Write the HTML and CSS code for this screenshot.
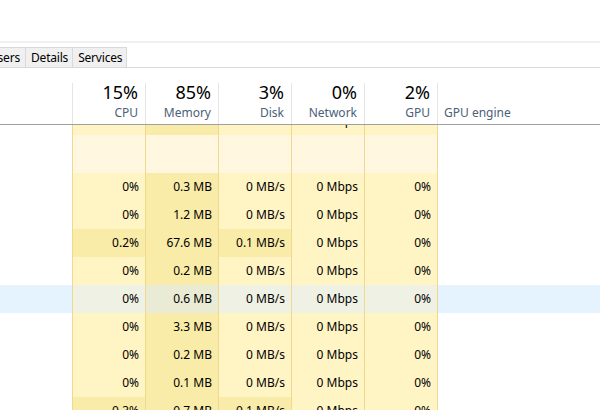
FILE: index.html
```html
<!DOCTYPE html>
<html lang="en">
<head>
<meta charset="utf-8">
<title>Task Manager</title>
<link rel="stylesheet" href="styles.css">
</head>
<body>
<div class="app">
  <div class="topspace"></div>
  <div class="divider"></div>
  <div class="tabs">
    <div class="tab tab-cut"><span>Users</span></div>
    <div class="tab">Details</div>
    <div class="tab">Services</div>
  </div>
  <div class="table">
    <div class="thead">
      <div class="hname"></div>
      <div class="hcol"><div class="pct">15%</div><div class="lbl">CPU</div></div>
      <div class="hcol"><div class="pct">85%</div><div class="lbl">Memory</div></div>
      <div class="hcol"><div class="pct">3%</div><div class="lbl">Disk</div></div>
      <div class="hcol"><div class="pct">0%</div><div class="lbl">Network</div></div>
      <div class="hcol"><div class="pct">2%</div><div class="lbl">GPU</div></div>
      <div class="hcol hleft"><div class="pct"></div><div class="lbl">GPU engine</div></div>
    </div>
    <div class="tbody">
      <div class="scroll">
        <div class="row">
          <div class="name"></div>
          <div class="cell">0%</div><div class="cell hot">0.4 MB</div><div class="cell">0 MB/s</div><div class="cell">0 Mbps</div><div class="cell">0%</div>
          <div class="eng"></div>
        </div>
        <div class="row group">
          <div class="name"></div>
          <div class="cell"></div><div class="cell"></div><div class="cell"></div><div class="cell"></div><div class="cell"></div>
          <div class="eng"></div>
        </div>
        <div class="row">
          <div class="name"></div>
          <div class="cell">0%</div><div class="cell hot">0.3 MB</div><div class="cell">0 MB/s</div><div class="cell">0 Mbps</div><div class="cell">0%</div>
          <div class="eng"></div>
        </div>
        <div class="row">
          <div class="name"></div>
          <div class="cell">0%</div><div class="cell hot">1.2 MB</div><div class="cell">0 MB/s</div><div class="cell">0 Mbps</div><div class="cell">0%</div>
          <div class="eng"></div>
        </div>
        <div class="row">
          <div class="name"></div>
          <div class="cell hot">0.2%</div><div class="cell hot">67.6 MB</div><div class="cell hot">0.1 MB/s</div><div class="cell">0 Mbps</div><div class="cell">0%</div>
          <div class="eng"></div>
        </div>
        <div class="row">
          <div class="name"></div>
          <div class="cell">0%</div><div class="cell hot">0.2 MB</div><div class="cell">0 MB/s</div><div class="cell">0 Mbps</div><div class="cell">0%</div>
          <div class="eng"></div>
        </div>
        <div class="row selected">
          <div class="name"></div>
          <div class="cell">0%</div><div class="cell hot">0.6 MB</div><div class="cell">0 MB/s</div><div class="cell">0 Mbps</div><div class="cell">0%</div>
          <div class="eng"></div>
        </div>
        <div class="row">
          <div class="name"></div>
          <div class="cell">0%</div><div class="cell hot">3.3 MB</div><div class="cell">0 MB/s</div><div class="cell">0 Mbps</div><div class="cell">0%</div>
          <div class="eng"></div>
        </div>
        <div class="row">
          <div class="name"></div>
          <div class="cell">0%</div><div class="cell hot">0.2 MB</div><div class="cell">0 MB/s</div><div class="cell">0 Mbps</div><div class="cell">0%</div>
          <div class="eng"></div>
        </div>
        <div class="row">
          <div class="name"></div>
          <div class="cell">0%</div><div class="cell hot">0.1 MB</div><div class="cell">0 MB/s</div><div class="cell">0 Mbps</div><div class="cell">0%</div>
          <div class="eng"></div>
        </div>
        <div class="row">
          <div class="name"></div>
          <div class="cell hot">0.3%</div><div class="cell hot">0.7 MB</div><div class="cell hot">0.1 MB/s</div><div class="cell">0 Mbps</div><div class="cell">0%</div>
          <div class="eng"></div>
        </div>
      </div>
    </div>
  </div>
</div>
</body>
</html>
```

FILE: styles.css
```css
html, body {
  margin: 0;
  padding: 0;
  background: #ffffff;
}

body {
  font-family: "Noto Sans", "Open Sans", sans-serif;
  font-size: 12px;
  color: #000000;
  width: 600px;
  height: 410px;
  overflow: hidden;
}

.app {
  display: flex;
  flex-direction: column;
  width: 600px;
  height: 410px;
  overflow: hidden;
}

.topspace {
  height: 41px;
  flex: none;
}

.divider {
  height: 2px;
  background: #f0f0f0;
  flex: none;
  margin-bottom: 4px;
}

.tabs {
  display: flex;
  height: 20px;
  border-bottom: 1px solid #d9d9d9;
  flex: none;
}

.tab {
  height: 19px;
  border: 1px solid #d9d9d9;
  border-bottom: none;
  border-left: none;
  background: #f0f0f0;
  padding: 0 4px 0 5px;
  line-height: 19px;
  letter-spacing: -0.2px;
  white-space: nowrap;
}

.tab-cut {
  width: 20px;
  padding: 0 5px 0 0;
  overflow: hidden;
  display: flex;
  justify-content: flex-end;
}

.table {
  display: flex;
  flex-direction: column;
  flex: 1;
  min-height: 0;
}

.thead {
  display: grid;
  grid-template-columns: 72px repeat(5, 73px) 1fr;
  height: 56px;
  border-bottom: 1px solid #a0a0a0;
  flex: none;
}

.hcol {
  margin-top: 15px;
  border-left: 1px solid #e5e5e5;
  text-align: right;
  padding-right: 7px;
}

.hleft {
  text-align: left;
  padding-left: 6px;
  padding-right: 0;
}

.pct {
  font-size: 18px;
  line-height: 19px;
  height: 19px;
  margin-bottom: 3px;
  color: #000000;
}

.lbl {
  line-height: 16px;
  color: #4c607a;
}

.tbody {
  flex: 1;
  min-height: 0;
  overflow: hidden;
}

.scroll {
  margin-top: -18px;
}

.row {
  display: grid;
  grid-template-columns: 72px repeat(5, 73px) 1fr;
  height: 28px;
  line-height: 28px;
}

.row.group {
  height: 38px;
}

.name, .eng {
  background: #ffffff;
}

.eng {
  border-left: 1px solid #f0d98f;
}

.cell {
  border-left: 1px solid #f0d98f;
  background: #fff4c4;
  text-align: right;
  padding-right: 6px;
  white-space: nowrap;
}

.cell.hot {
  background: #f9eca8;
}

.group .cell {
  background: #fff7df;
}

.selected .name, .selected .eng {
  background: #e5f3ff;
}

.selected .cell {
  background: #eff1e5;
}

.selected .cell.hot {
  background: #eaebd5;
}
```
